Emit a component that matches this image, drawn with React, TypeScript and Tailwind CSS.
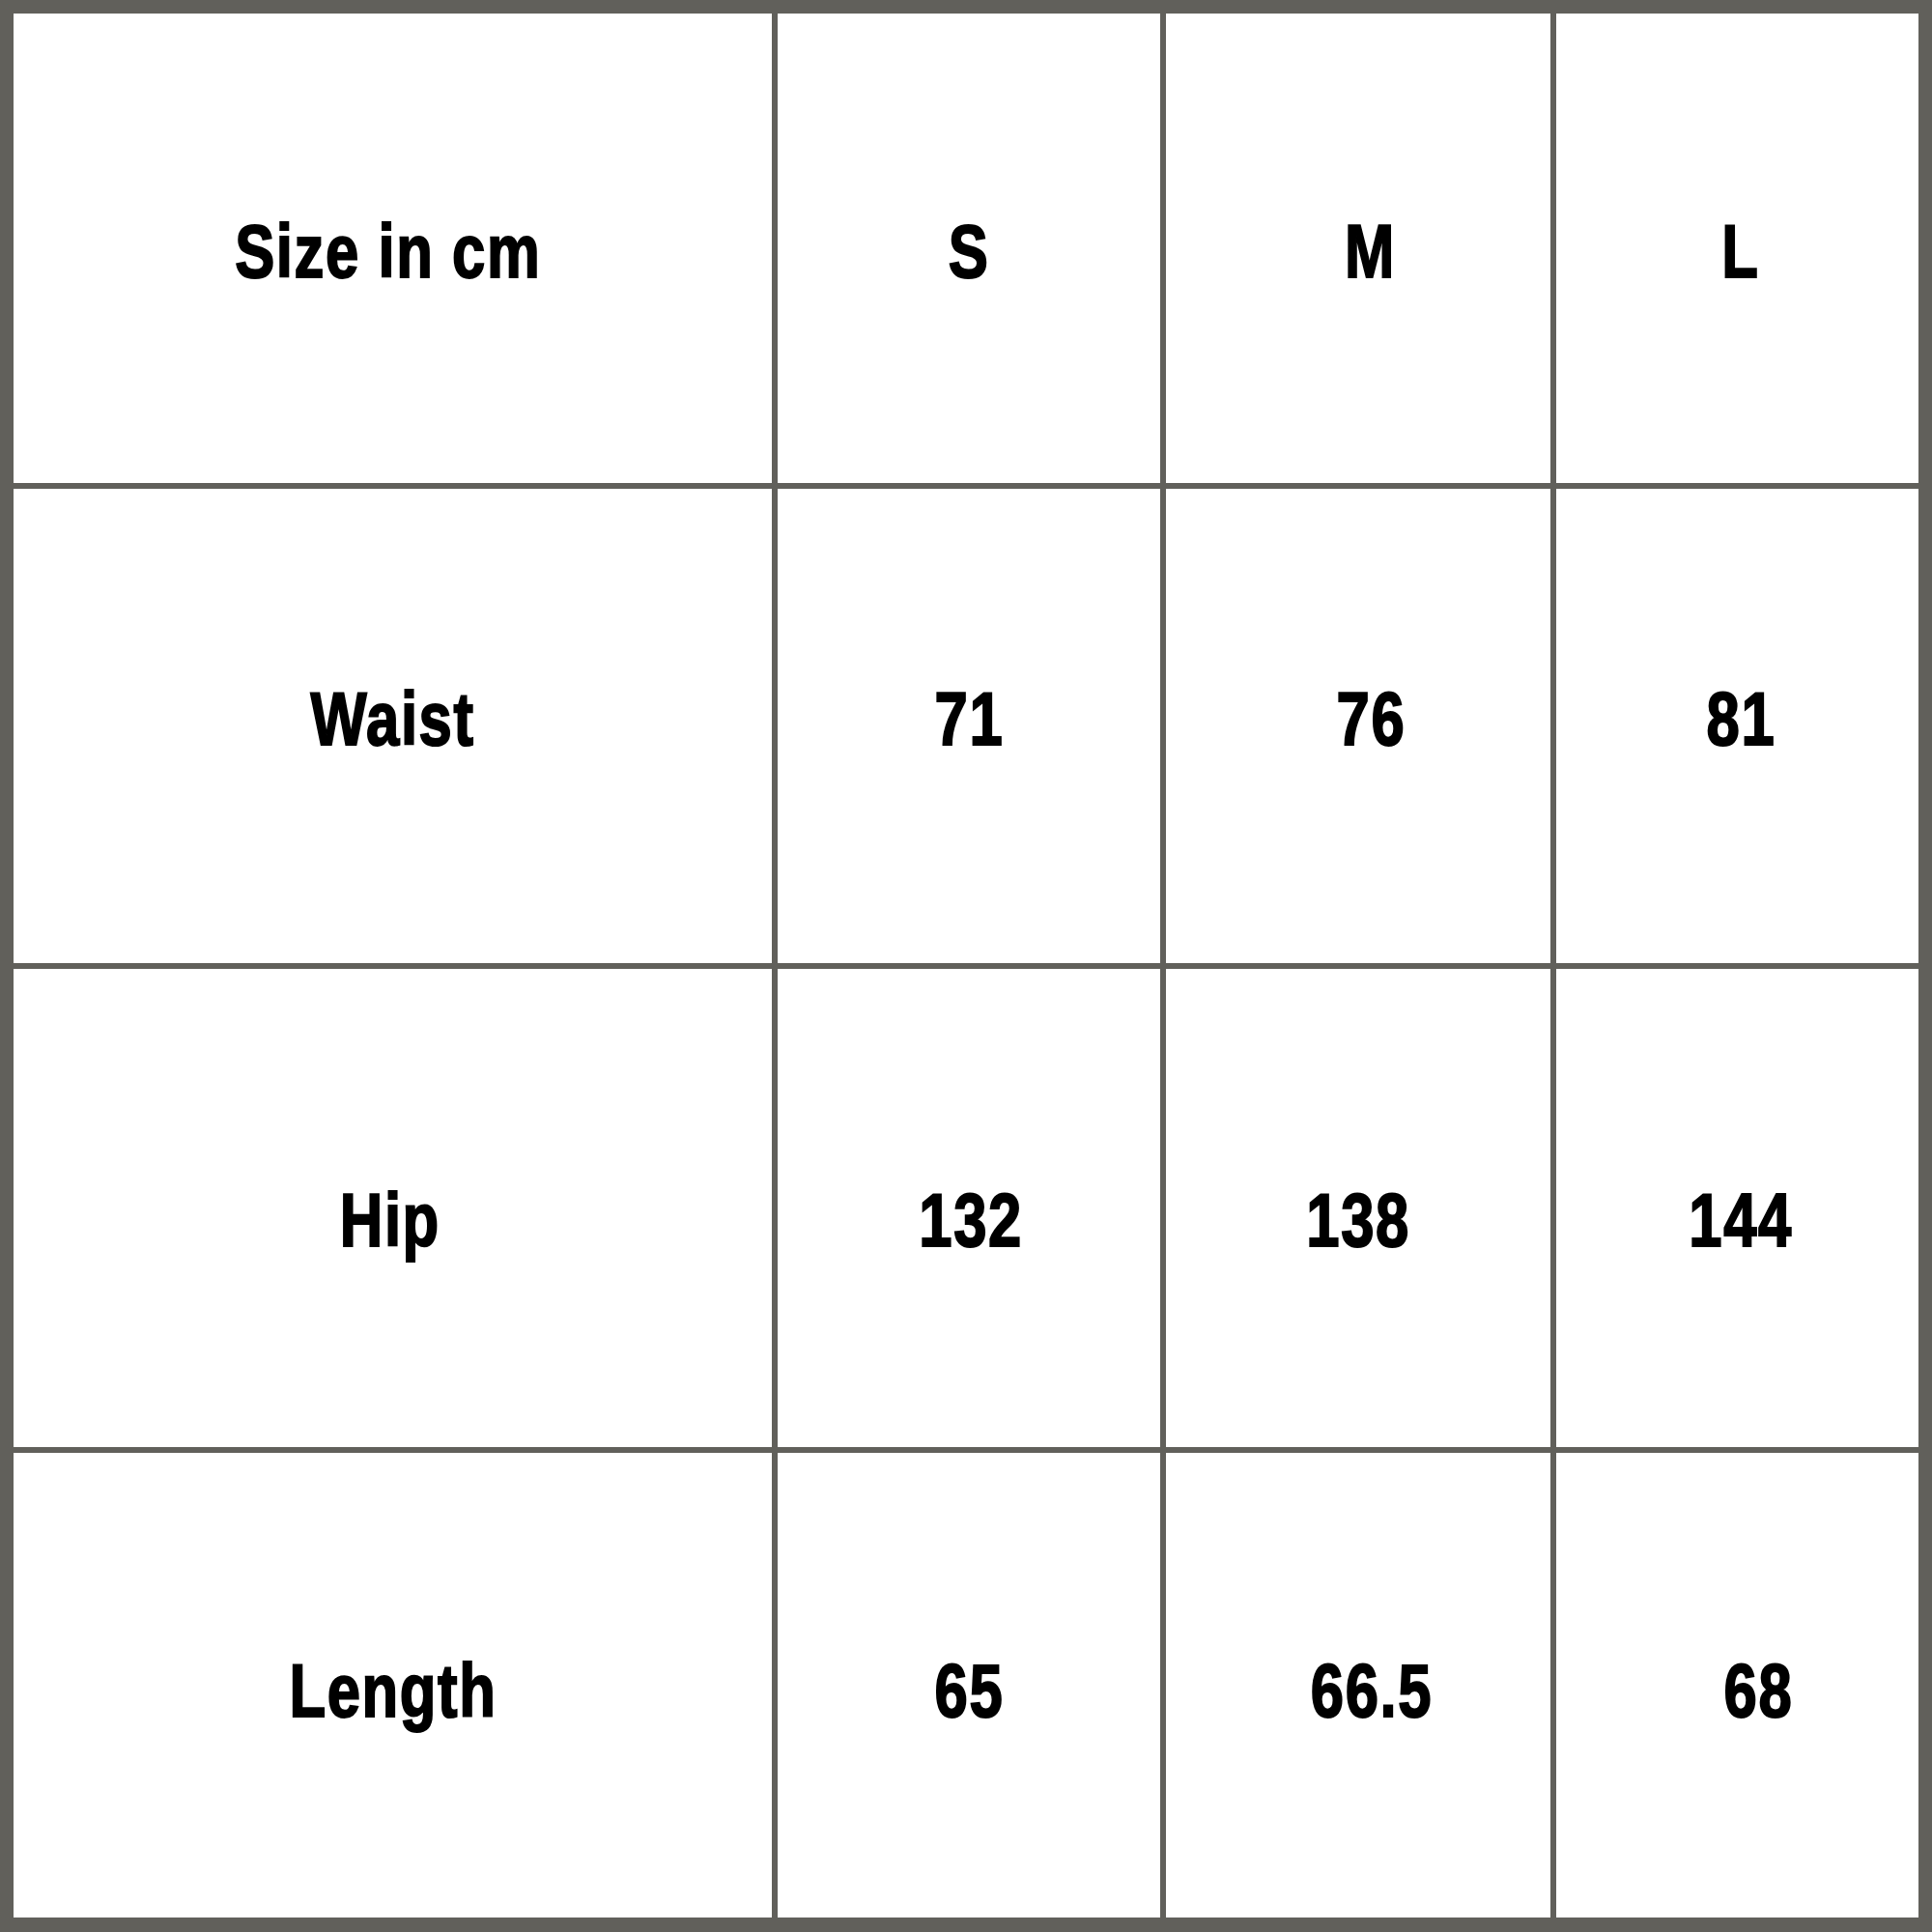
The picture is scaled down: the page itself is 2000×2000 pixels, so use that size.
const rows = [
  {
    dy: "pt-[6px]",
    cells: [
      { text: "Size in cm", pad: "pr-[10px]" },
      { text: "S", pad: "" },
      { text: "M", pad: "pl-[24px]" },
      { text: "L", pad: "pl-[6px]" },
    ],
  },
  {
    dy: "pb-[16px]",
    cells: [
      { text: "Waist", pad: "" },
      { text: "71", pad: "" },
      { text: "76", pad: "pl-[26px]" },
      { text: "81", pad: "pl-[8px]" },
    ],
  },
  {
    dy: "pt-[24px]",
    cells: [
      { text: "Hip", pad: "pr-[6px]" },
      { text: "132", pad: "pl-[4px]" },
      { text: "138", pad: "" },
      { text: "144", pad: "pl-[8px]" },
    ],
  },
  {
    dy: "pt-[10px]",
    cells: [
      { text: "Length", pad: "" },
      { text: "65", pad: "" },
      { text: "66.5", pad: "pl-[28px]" },
      { text: "68", pad: "pl-[44px]" },
    ],
  },
];

export default function App() {
  return (
    <div className="w-[2000px] h-[2000px] bg-[#61605b] pt-[14px] pl-[14px] pr-[14px] pb-[15px]">
      <div className="grid h-full grid-cols-[785px_396px_398px_375px] grid-rows-[486px_491px_495px_481px] gap-[6px]">
        {rows.map((row, r) =>
          row.cells.map((cell, c) => (
            <div
              key={`${r}-${c}`}
              className={`flex items-center justify-center bg-white ${row.dy} ${cell.pad}`}
            >
              <span className="inline-block scale-x-[0.79] whitespace-nowrap font-['Liberation_Sans',Arial,sans-serif] text-[78px] font-bold leading-none tracking-[2px] text-black [-webkit-text-stroke:2px_black]">
                {cell.text}
              </span>
            </div>
          ))
        )}
      </div>
    </div>
  );
}
